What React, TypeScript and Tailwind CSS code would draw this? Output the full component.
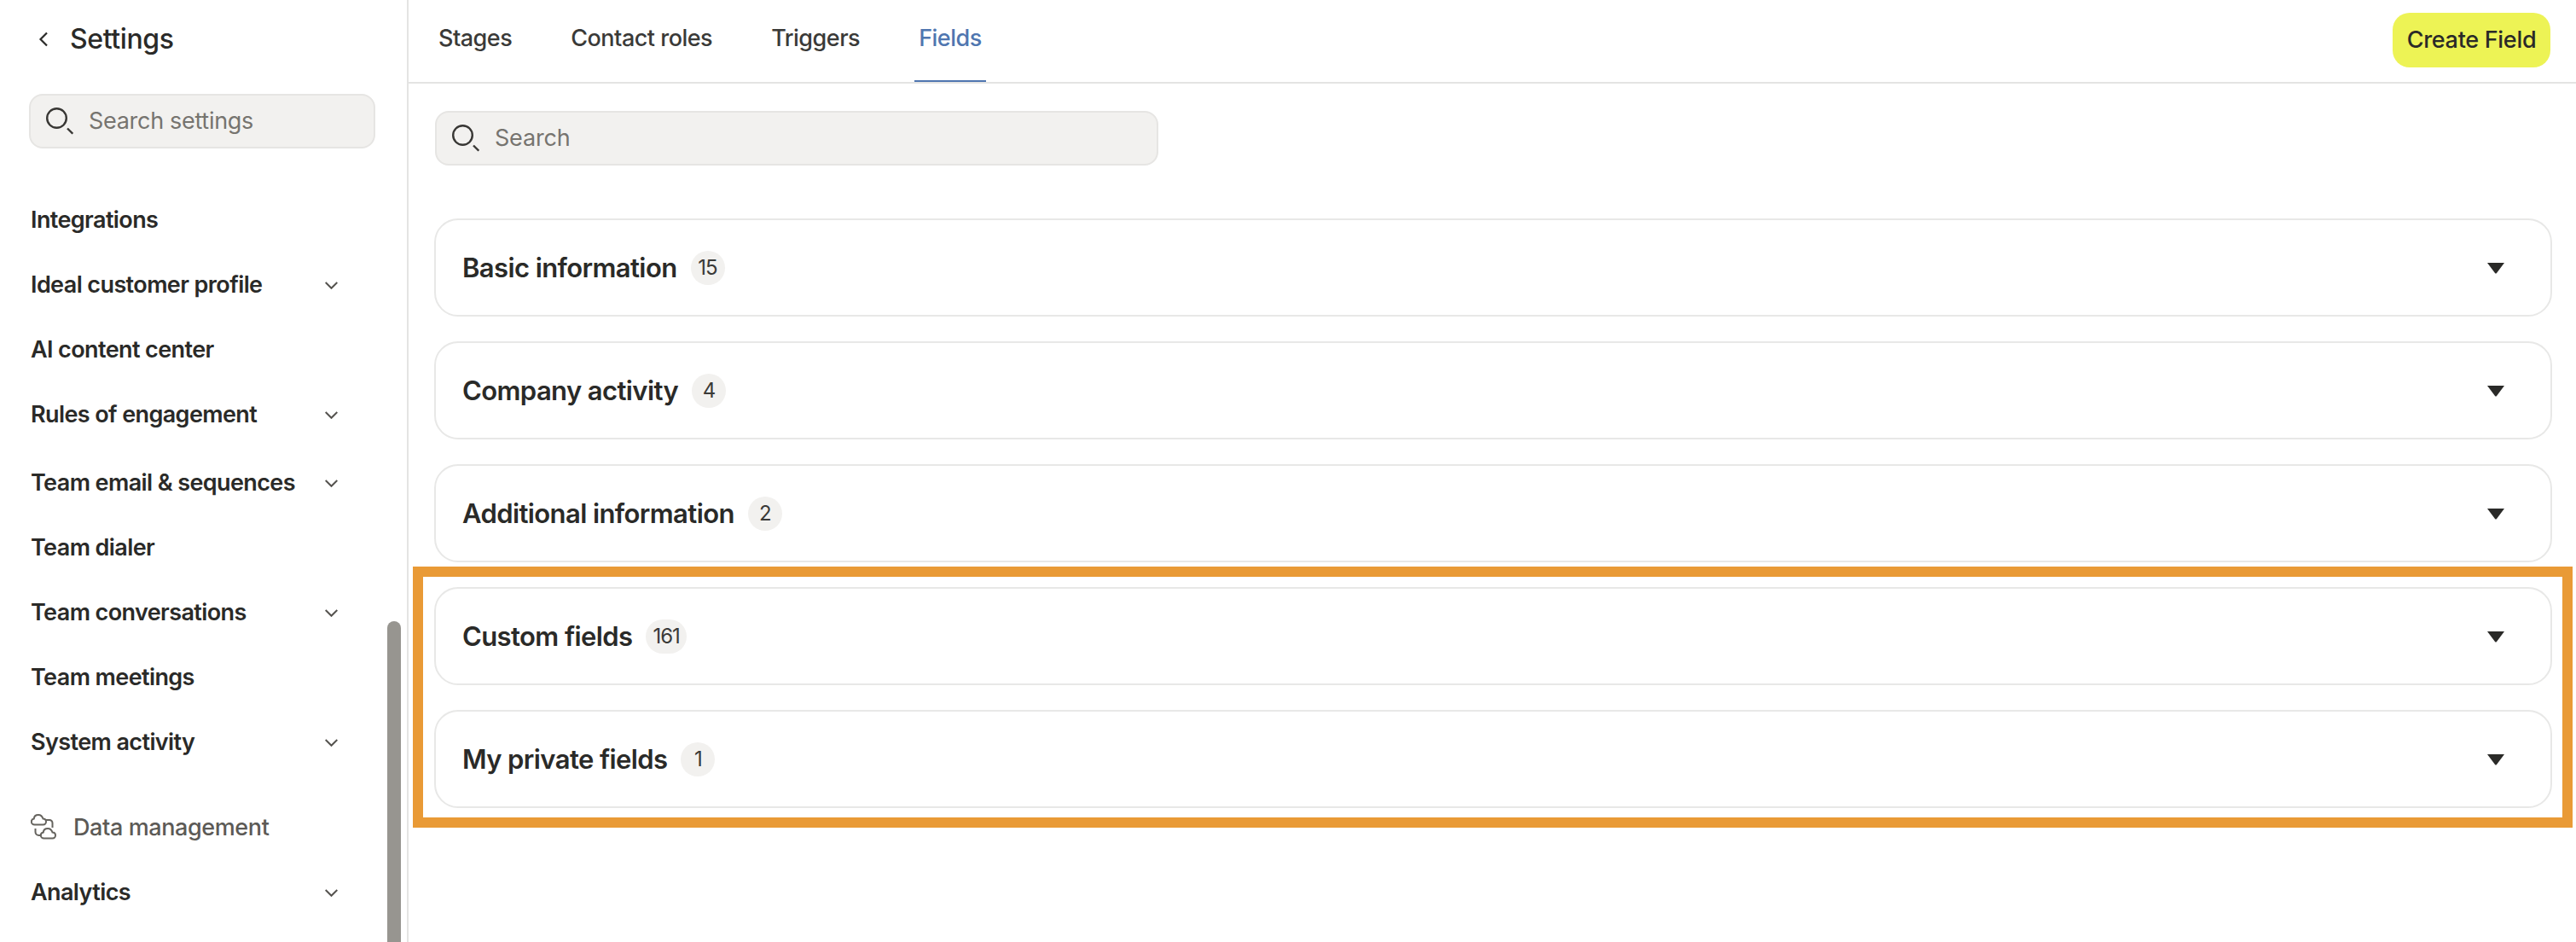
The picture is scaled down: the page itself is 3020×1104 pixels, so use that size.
import React from "react";

const font = { fontFamily: "Inter, 'Noto Sans', sans-serif" };

function Chevron() {
  return (
    <svg width="15" height="9" viewBox="0 0 15 9" fill="none" className="shrink-0 mt-[3px]">
      <path d="M.7 1 L7.500 7.800 L14.300 1" stroke="#55534f" strokeWidth="2" />
    </svg>
  );
}

function SearchIcon() {
  return (
    <svg width="32" height="32" viewBox="0 0 32 32" fill="none" className="shrink-0">
      <circle cx="12.500" cy="12.500" r="11.300" stroke="#383734" strokeWidth="2.400" />
      <path d="M25 24.500 L31.300 30.700" stroke="#383734" strokeWidth="2.400" />
    </svg>
  );
}

const cloud =
  "M4.500 12.500 H14.500 C17 12.500 18 10.500 18 9 C18 7 16.500 5.500 14.500 5.500 C13.500 2.500 11 1 9 1 C6 1 4 3 3.800 5.500 C1.500 6 .8 8 .8 9 C.8 11 2.500 12.500 4.500 12.500 Z";

function CloudsIcon() {
  return (
    <svg width="30" height="30" viewBox="0 0 30 30" fill="none" className="shrink-0">
      <g stroke="#66645f" strokeWidth="2">
        <path d={cloud} />
        <path d={cloud} transform="translate(11 16)" />
        <path d="M18 7 H22 A3.500 3.500 0 0 1 25.500 10.500 V16" />
        <path d="M5.500 17 V21 A4 4 0 0 0 9.500 25 H12" />
      </g>
    </svg>
  );
}

function Triangle() {
  return (
    <svg width="22" height="14" viewBox="0 0 22 14" className="shrink-0">
      <path d="M1 1 H21 L12 13 Q11 14 10 13 Z" fill="#2a2a28" />
    </svg>
  );
}

function NavItem({ label, chevron, extra }: { label: string; chevron?: boolean; extra?: boolean }) {
  return (
    <div className={`flex items-center justify-between pr-[81px] ${extra ? "h-[80px] pt-[4px]" : "h-[76px]"}`}>
      <span className="pt-[2px] text-[27px] font-semibold text-[#2a2a28] tracking-[-0.6px]">{label}</span>
      {chevron && <Chevron />}
    </div>
  );
}

function Card({ title, count }: { title: string; count: string }) {
  return (
    <div className="h-[115px] rounded-[28px] border-2 border-[#e8e8e7] flex items-center justify-between pl-[31px] pr-[53px]">
      <div className="flex items-center gap-[16px]">
        <span className="pt-[2px] text-[31px] font-semibold text-[#2a2a28] tracking-[-0.6px]">{title}</span>
        <span className="h-[40px] min-w-[40px] px-[8px] rounded-full bg-[#f2f1ef] flex items-center justify-center text-[24px] text-[#3a3a38] tracking-[-1px]">
          {count}
        </span>
      </div>
      <Triangle />
    </div>
  );
}

function Tab({ label, active }: { label: string; active?: boolean }) {
  return (
    <div className={`h-full flex items-center px-[5px] -mx-[5px] pb-[3px] border-b-2 ${active ? "border-[#4f76b0] text-[#4f76b0]" : "border-transparent text-[#3a3a38]"}`}>
      <span className="text-[27px] font-medium tracking-[-0.5px]">{label}</span>
    </div>
  );
}

export default function App() {
  return (
    <div style={font} className="relative flex h-[1104px] w-[3020px] overflow-hidden bg-white">
      <aside className="relative w-[479px] shrink-0 border-r-2 border-[#e4e4e3] overflow-hidden">
        <div className="h-[92px] flex items-center pl-[44px] gap-[24px]">
          <svg width="14" height="18" viewBox="0 0 14 18" fill="none">
            <path d="M11 1.500 L3.500 9 L11 16.500" stroke="#2a2a28" strokeWidth="2.200" />
          </svg>
          <span className="text-[32px] font-medium text-[#2a2a28] tracking-[-0.4px]">Settings</span>
        </div>
        <div className="mt-[18px] ml-[34px] w-[406px] h-[64px] rounded-[16px] bg-[#f2f1ef] border-2 border-[#e6e5e3] flex items-center pl-[18px] gap-[18px]">
          <SearchIcon />
          <span className="pt-[1px] text-[27px] text-[#76746f] tracking-[-0.3px]">Search settings</span>
        </div>
        <nav className="mt-[45px] pl-[36px]">
          <NavItem label="Integrations" />
          <NavItem label="Ideal customer profile" chevron />
          <NavItem label="AI content center" />
          <NavItem label="Rules of engagement" chevron />
          <NavItem label="Team email & sequences" chevron extra />
          <NavItem label="Team dialer" />
          <NavItem label="Team conversations" chevron />
          <NavItem label="Team meetings" />
          <NavItem label="System activity" chevron />
          <div className="h-[24px]" />
          <div className="h-[76px] flex items-center gap-[20px]">
            <CloudsIcon />
            <span className="pt-[2px] text-[27px] font-medium text-[#5c5a56] tracking-[-0.4px]">Data management</span>
          </div>
          <NavItem label="Analytics" chevron />
        </nav>
        <div className="absolute left-[454px] top-[728px] w-[16px] h-[400px] rounded-full bg-[#979590]" />
      </aside>

      <main className="flex-1 min-w-0">
        <header className="h-[98px] border-b-2 border-[#e4e4e3] flex items-center justify-between pl-[35px] pr-[30px]">
          <div className="h-full flex gap-[69px]">
            <Tab label="Stages" />
            <Tab label="Contact roles" />
            <Tab label="Triggers" />
            <Tab label="Fields" active />
          </div>
          <button className="h-[64px] w-[185px] -mt-[2px] rounded-[20px] bg-[#edf355] text-[27px] font-medium text-[#2a2a28] tracking-[-0.3px]">
            Create Field
          </button>
        </header>
        <div className="pl-[30px] pr-[28px]">
          <div className="mt-[32px] ml-[1px] w-[848px] h-[64px] rounded-[16px] bg-[#f2f1ef] border-2 border-[#e6e5e3] flex items-center pl-[18px] gap-[18px]">
            <SearchIcon />
            <span className="pt-[1px] text-[27px] text-[#76746f] tracking-[-0.2px]">Search</span>
          </div>
          <div className="mt-[62px] flex flex-col gap-[29px]">
            <Card title="Basic information" count="15" />
            <Card title="Company activity" count="4" />
            <Card title="Additional information" count="2" />
            <Card title="Custom fields" count="161" />
            <Card title="My private fields" count="1" />
          </div>
        </div>
      </main>

      <div className="absolute left-[484px] top-[664px] w-[2532px] h-[306px] border-[12px] border-[#e99a36] pointer-events-none" />
    </div>
  );
}
